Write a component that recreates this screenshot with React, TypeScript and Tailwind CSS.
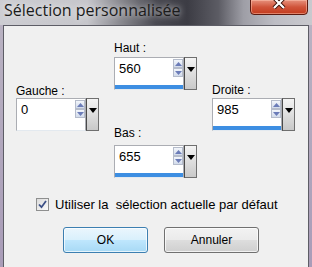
import React from 'react';

const uiFont = { fontFamily: '"Liberation Sans", Arial, sans-serif' };

// small spin arrow
const SpinArrow = ({ up }: { up?: boolean }) => (
  <div className="flex-1 flex items-center justify-center border border-[#b5bccb] bg-gradient-to-b from-[#f3f6fb] to-[#d2dbeb]">
    <svg width="7" height="4" viewBox="0 0 7 4">
      {up ? <polygon points="0,4 7,4 3.5,0" fill="#6b7cb8" /> : <polygon points="0,0 7,0 3.5,4" fill="#6b7cb8" />}
    </svg>
  </div>
);

interface SpinBoxProps {
  value: string;
  bar?: boolean;
}

const SpinBox = ({ value, bar }: SpinBoxProps) => {
  return (
    <div className="flex w-[83px] h-[33px]">
      <div className="flex-1 flex flex-col border border-[#abadb3] border-b-[#e3e9ef] bg-white">
        <div className="flex flex-1">
          <span className="flex-1 pl-[4px] pt-[3px] text-[13px] leading-[15px] text-black">{value}</span>
          <div className="flex flex-col w-[10px] h-[18px] mt-[1px]">
            <SpinArrow up />
            <SpinArrow />
          </div>
        </div>
        {bar && <div className="h-[4px] bg-[#3d8ee2]" />}
      </div>
      <div className="w-[13px] flex justify-center border border-[#6f6f6f] border-l-[#4a4a4a] bg-gradient-to-b from-[#f4f4f4] to-[#c9c9c9]">
        <svg width="8" height="5" viewBox="0 0 8 5" className="mt-[9px]">
          <polygon points="0,0 8,0 4,5" fill="#000" />
        </svg>
      </div>
    </div>
  );
};

const Label = ({ text, className = '' }: { text: string; className?: string }) => (
  <div className={`h-[14px] text-[12px] leading-[14px] text-black whitespace-pre ${className}`}>{text}</div>
);

export default function App() {
  return (
    <div
      className="w-[312px] h-[267px] flex flex-col overflow-hidden bg-[linear-gradient(90deg,#cdcdd2_0%,#c6c6cb_28%,#8d8d93_38%,#4a4a52_50%,#3c3c44_60%,#5c5c64_70%,#9e9ea6_78%,#bdbdc4_88%,#c9c9ce_100%)]"
      style={uiFont}
    >
      {/* title bar */}
      <div className="h-[25px] flex items-start justify-between shrink-0">
        <div
          className="pl-[4px] pt-[0px] text-[16px] leading-[21px] text-[#1b1b1b] [text-shadow:0_0_6px_rgba(255,255,255,0.9)]"
          style={{ fontFamily: '"Open Sans", "Noto Sans", sans-serif' }}
        >
          Sélection personnalisée
        </div>
        <div className="mr-[4px] w-[58px] h-[16px] -mt-[1px] rounded-b-[4px] border border-[#5b1a10] bg-gradient-to-b from-[#e6907c] via-[#d0543a] to-[#c23a1c] flex justify-center shadow-[inset_0_0_0_1px_rgba(255,200,180,0.5)]">
          <svg width="14" height="11" viewBox="0 0 14 11" className="-mt-[2px]">
            <path d="M2 0 L12 10 M12 0 L2 10" stroke="#3a0f08" strokeWidth="4" />
            <path d="M2 0 L12 10 M12 0 L2 10" stroke="#ffffff" strokeWidth="2.2" />
          </svg>
        </div>
      </div>

      {/* frame + client area */}
      <div className="flex-1 flex px-[3px] bg-gradient-to-b from-[#b9b2c2] to-[#a99cb8]">
        <div className="flex-1 flex flex-col border-l border-t border-r border-[#5d5d66] bg-[#f0f0f0]">
          <div className="flex pl-[12px] gap-x-[15px]">
            <div className="w-[83px] pt-[58px]">
              <Label text="Gauche :" />
              <SpinBox value="0" />
            </div>
            <div className="w-[83px] pt-[15px]">
              <Label text="Haut :" className="mb-[2px]" />
              <SpinBox value="560" bar />
              <Label text="Bas :" className="mt-[36px] mb-[5px]" />
              <SpinBox value="655" bar />
            </div>
            <div className="w-[83px] pt-[57px]">
              <Label text="Droite :" className="mb-[1px]" />
              <SpinBox value="985" bar />
            </div>
          </div>

          <div className="flex items-center pl-[32px] mt-[20px] h-[13px]">
            <div className="w-[13px] h-[13px] border border-[#8e8f8f] bg-gradient-to-br from-[#dcdcdc] to-[#fafafa] flex items-center justify-center">
              <svg width="9" height="9" viewBox="0 0 9 9">
                <path d="M1 4.5 L3.5 7.2 L8 1" fill="none" stroke="#3b4f86" strokeWidth="1.8" />
              </svg>
            </div>
            <span className="ml-[6px] text-[13px] leading-[14px] text-black whitespace-pre">Utiliser la  sélection actuelle par défaut</span>
          </div>

          <div className="flex pl-[59px] mt-[16px] gap-x-[16px]">
            <button className="w-[85px] h-[26px] rounded-[3px] border border-[#3c7fb1] bg-[linear-gradient(180deg,#eaf6fd_0%,#d9f0fc_48%,#bee6fd_52%,#a7d9f5_100%)] text-[12px] text-black shadow-[inset_0_0_0_1px_rgba(255,255,255,0.7)]">
              OK
            </button>
            <button className="w-[95px] h-[26px] rounded-[3px] border border-[#707070] bg-[linear-gradient(180deg,#f2f2f2_0%,#ebebeb_48%,#dddddd_52%,#cfcfcf_100%)] text-[12px] text-black shadow-[inset_0_0_0_1px_rgba(255,255,255,0.7)]">
              Annuler
            </button>
          </div>
        </div>
      </div>
    </div>
  );
}
